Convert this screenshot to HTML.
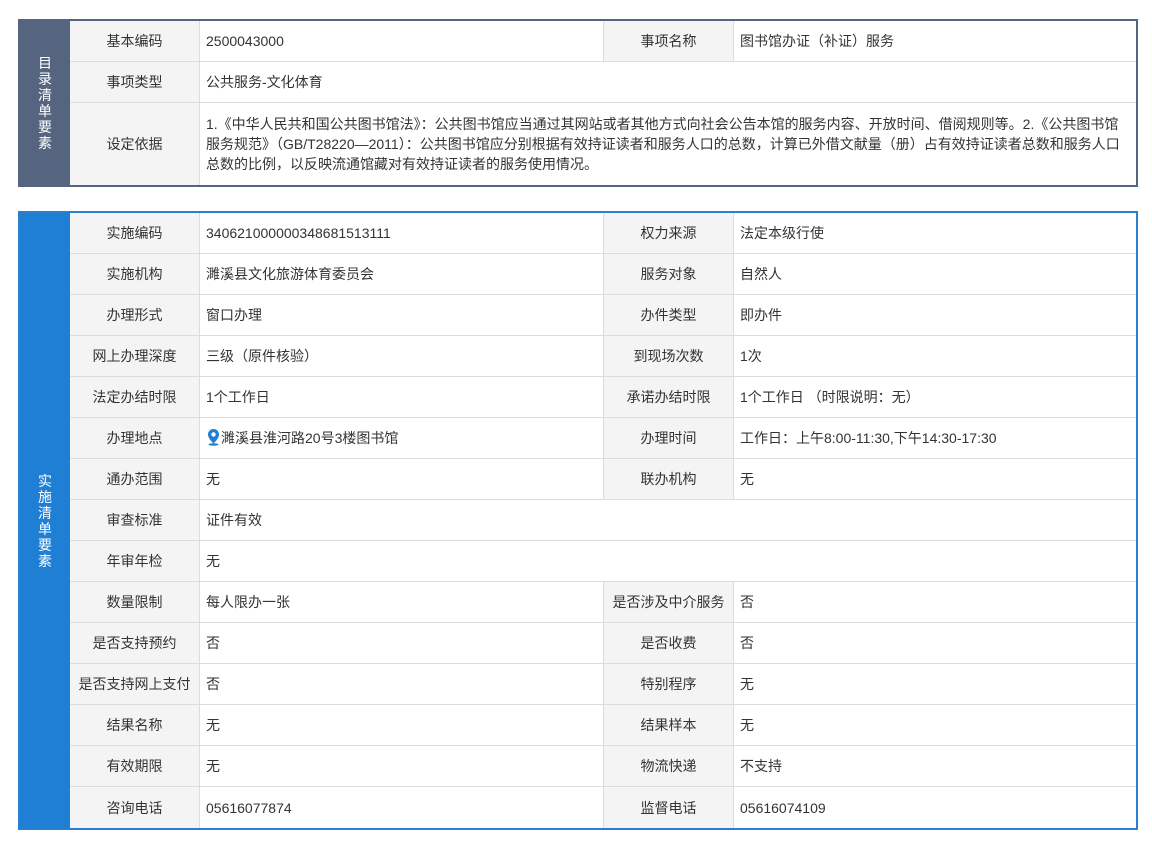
<!DOCTYPE html>
<html><head><meta charset="utf-8"><style>
body{margin:0;background:#fff;font-family:"Liberation Sans","Noto Sans CJK SC",sans-serif;font-size:14px;color:#333;}
.box{position:absolute;left:18px;width:1116px;border:2px solid #56657f;}
.b2{border-color:#2a7fd1;}
table{border-collapse:separate;border-spacing:0;table-layout:fixed;width:1116px;}
td{border-right:1px solid #dcdcdc;border-bottom:1px solid #dcdcdc;height:40px;padding:0 6px;box-sizing:border-box;vertical-align:middle;}
td:last-child{border-right:none;}
tr:last-child td{border-bottom:none;}
td.l{background:#f4f4f4;text-align:center;padding:0;}
td.s{background:#56657f;color:#fff;text-align:center;border:none;padding:0;}
.b2 td.s{background:#1f7fd4;}
.v{display:inline-block;width:15px;line-height:16px;word-break:break-all;}
.d{line-height:20px;padding:1px 12px 1px 6px;}
</style></head><body>
<div class="box" style="top:19px">
<table>
<colgroup><col style="width:50px"><col style="width:130px"><col style="width:404px"><col style="width:130px"><col></colgroup>
<tr style="height:41px"><td class="s" rowspan="3"><span class="v">目录清单要素</span></td><td class="l">基本编码</td><td>2500043000</td><td class="l">事项名称</td><td>图书馆办证（补证）服务</td></tr>
<tr style="height:41px"><td class="l">事项类型</td><td colspan="3">公共服务-文化体育</td></tr>
<tr style="height:82px"><td class="l">设定依据</td><td colspan="3" class="d">1.《中华人民共和国公共图书馆法》：公共图书馆应当通过其网站或者其他方式向社会公告本馆的服务内容、开放时间、借阅规则等。2.《公共图书馆服务规范》（GB/T28220—2011）：公共图书馆应分别根据有效持证读者和服务人口的总数，计算已外借文献量（册）占有效持证读者总数和服务人口总数的比例，以反映流通馆藏对有效持证读者的服务使用情况。</td></tr>
</table></div>
<div class="box b2" style="top:211px">
<table>
<colgroup><col style="width:50px"><col style="width:130px"><col style="width:404px"><col style="width:130px"><col></colgroup>
<tr style="height:41px"><td class="s" rowspan="15"><span class="v">实施清单要素</span></td><td class="l">实施编码</td><td>340621000000348681513111</td><td class="l">权力来源</td><td>法定本级行使</td></tr>
<tr style="height:41px"><td class="l">实施机构</td><td>濉溪县文化旅游体育委员会</td><td class="l">服务对象</td><td>自然人</td></tr>
<tr style="height:41px"><td class="l">办理形式</td><td>窗口办理</td><td class="l">办件类型</td><td>即办件</td></tr>
<tr style="height:41px"><td class="l">网上办理深度</td><td>三级（原件核验）</td><td class="l">到现场次数</td><td>1次</td></tr>
<tr style="height:41px"><td class="l">法定办结时限</td><td>1个工作日</td><td class="l">承诺办结时限</td><td>1个工作日 （时限说明：无）</td></tr>
<tr style="height:41px"><td class="l">办理地点</td><td><svg width="15" height="18" viewBox="0 0 15 18" style="vertical-align:-3px"><path d="M7.5 1a5.5 5.5 0 0 0-5.5 5.5c0 4 5.5 9 5.5 9s5.5-5 5.5-9A5.5 5.5 0 0 0 7.5 1z" fill="#1f7fd4"/><circle cx="7.5" cy="6.5" r="2.2" fill="#fff"/><ellipse cx="7.5" cy="16.5" rx="5" ry="1.2" fill="#1f7fd4"/></svg>濉溪县淮河路20号3楼图书馆</td><td class="l">办理时间</td><td>工作日：上午8:00-11:30,下午14:30-17:30</td></tr>
<tr style="height:41px"><td class="l">通办范围</td><td>无</td><td class="l">联办机构</td><td>无</td></tr>
<tr style="height:41px"><td class="l">审查标准</td><td colspan="3">证件有效</td></tr>
<tr style="height:41px"><td class="l">年审年检</td><td colspan="3">无</td></tr>
<tr style="height:41px"><td class="l">数量限制</td><td>每人限办一张</td><td class="l">是否涉及中介服务</td><td>否</td></tr>
<tr style="height:41px"><td class="l">是否支持预约</td><td>否</td><td class="l">是否收费</td><td>否</td></tr>
<tr style="height:41px"><td class="l">是否支持网上支付</td><td>否</td><td class="l">特别程序</td><td>无</td></tr>
<tr style="height:41px"><td class="l">结果名称</td><td>无</td><td class="l">结果样本</td><td>无</td></tr>
<tr style="height:41px"><td class="l">有效期限</td><td>无</td><td class="l">物流快递</td><td>不支持</td></tr>
<tr style="height:41px"><td class="l">咨询电话</td><td>05616077874</td><td class="l">监督电话</td><td>05616074109</td></tr>
</table></div>
</body></html>
